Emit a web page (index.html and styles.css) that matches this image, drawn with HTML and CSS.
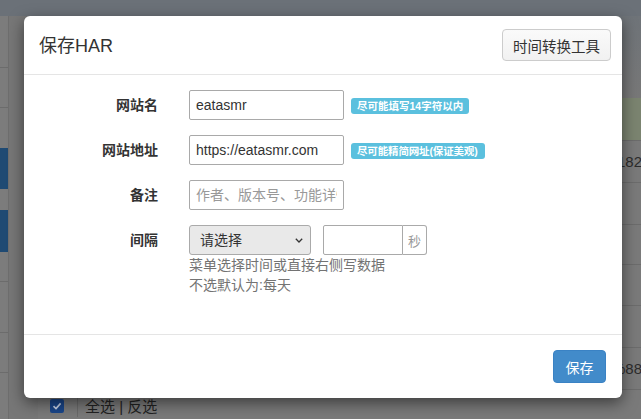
FILE: index.html
```html
<!DOCTYPE html>
<html lang="zh-CN">
<head>
<meta charset="utf-8">
<title>保存HAR</title>
<link rel="stylesheet" href="styles.css">
</head>
<body>
<div class="page">
  <div class="page-top"></div>
  <div class="page-main">
    <aside class="side">
      <div class="side-cell h52"></div>
      <div class="side-cell h40"></div>
      <div class="side-gap h40"></div>
      <div class="side-blue h41"></div>
      <div class="side-gap h21"></div>
      <div class="side-blue h42"></div>
      <div class="side-cell h30"></div>
      <div class="side-cell h51"></div>
      <div class="side-cell h40"></div>
    </aside>
    <div class="gutter"></div>
    <div class="content">
      <div class="c-head"></div>
      <div class="c-green"></div>
      <div class="c-row"><span class="num">182</span></div>
      <div class="c-row"></div>
      <div class="c-row h40"></div>
      <div class="c-row h41"></div>
      <div class="c-row"></div>
      <div class="c-row"><span class="num">%88</span></div>
      <div class="c-foot">
        <span class="check"><svg width="10" height="10" viewBox="0 0 10 10"><path d="M1.5 5.2 L4 7.6 L8.6 2.4" fill="none" stroke="#c9d3e6" stroke-width="1.6"/></svg></span>
        <span class="sep"></span>
        <span class="foot-text">全选 | 反选</span>
      </div>
    </div>
  </div>
</div>

<div class="modal">
  <div class="modal-header">
    <h4 class="modal-title">保存HAR</h4>
    <button class="btn btn-default" type="button">时间转换工具</button>
  </div>
  <div class="modal-body">
    <div class="form-row">
      <label class="form-label">网站名</label>
      <div class="field">
        <input class="form-control" type="text" value="eatasmr">
        <span class="badge">尽可能填写14字符以内</span>
      </div>
    </div>
    <div class="form-row">
      <label class="form-label">网站地址</label>
      <div class="field">
        <input class="form-control" type="text" value="https://eatasmr.com">
        <span class="badge badge-tight">尽可能精简网址(保证美观)</span>
      </div>
    </div>
    <div class="form-row">
      <label class="form-label">备注</label>
      <div class="field">
        <input class="form-control" type="text" placeholder="作者、版本号、功能详情">
      </div>
    </div>
    <div class="form-row last">
      <label class="form-label">间隔</label>
      <div class="field-col">
        <div class="field interval">
          <div class="select-wrap">
            <select class="select"><option>请选择</option></select>
            <svg class="chev" width="8" height="5" viewBox="0 0 8 5"><path d="M0.8 0.8 L4 4 L7.2 0.8" fill="none" stroke="#333" stroke-width="1.3"/></svg>
          </div>
          <div class="input-group">
            <input class="form-control sec" type="text">
            <span class="addon">秒</span>
          </div>
        </div>
        <p class="help">菜单选择时间或直接右侧写数据<br>不选默认为:每天</p>
      </div>
    </div>
  </div>
  <div class="modal-footer">
    <button class="btn btn-primary" type="button">保存</button>
  </div>
</div>
</body>
</html>
```

FILE: styles.css
```css
* { box-sizing: border-box; }

html, body {
  margin: 0;
  padding: 0;
}

body {
  width: 641px;
  height: 419px;
  overflow: hidden;
  position: relative;
  background: #7a7a7a;
  font-family: "Liberation Sans", "Noto Sans CJK SC", sans-serif;
  font-size: 14px;
  color: #333;
}

/* ---------- dimmed page behind the modal ---------- */
.page-top {
  height: 16px;
  background: #6b7178;
}

.page-main {
  display: flex;
  height: 403px;
}

.side {
  width: 9px;
  background: #7c7c7c;
  border-right: 1px solid #6e6e6e;
  display: flex;
  flex-direction: column;
}
.side-cell { border-bottom: 1px solid #6c6c6c; }
.side-blue { background: #1f4a73; }
.h52 { height: 52px; }
.h40 { height: 40px; }
.h41 { height: 41px; }
.h42 { height: 42px; }
.h30 { height: 30px; }
.h51 { height: 51px; }
.h21 { height: 21px; }

.gutter {
  width: 29px;
  background: #777;
}

.content {
  flex: 1;
  display: flex;
  flex-direction: column;
  background: #7a7a7a;
}
.c-head {
  height: 82px;
  background: linear-gradient(#6f7479, #787878);
}
.c-green {
  height: 42px;
  background: #7b8470;
}
.c-row {
  height: 42px;
  border-top: 1px solid #6c6c6c;
  display: flex;
  align-items: center;
  justify-content: flex-end;
}
.c-row.h40 { height: 40px; }
.c-row.h41 { height: 41px; }
.num {
  color: #2c2c2c;
  font-size: 15px;
  margin-right: -1px;
}
.c-foot {
  flex: 1;
  border-top: 1px solid #6c6c6c;
  display: flex;
  align-items: center;
  padding-left: 12px;
  padding-top: 2px;
}
.check {
  width: 14px;
  height: 14px;
  background: #1a468a;
  border-radius: 2px;
  display: flex;
  align-items: center;
  justify-content: center;
}
.sep {
  width: 1px;
  height: 22px;
  background: #6a6a6a;
  margin-left: 13px;
  margin-right: 7px;
}
.foot-text {
  color: #222;
  font-size: 15px;
}

/* ---------- modal ---------- */
.modal {
  position: absolute;
  left: 24px;
  top: 16px;
  width: 598px;
  background: #fff;
  border-radius: 6px;
  box-shadow: 0 5px 15px rgba(0, 0, 0, 0.5);
}

.modal-header {
  display: flex;
  justify-content: space-between;
  align-items: center;
  padding: 12px 11px 12px 15px;
  border-bottom: 1px solid #e5e5e5;
}
.modal-title {
  margin: 0;
  font-size: 18px;
  font-weight: normal;
  color: #333;
  line-height: 32px;
  padding-top: 2px;
}

.btn {
  font-family: "Liberation Sans", "Noto Sans CJK SC", sans-serif;
  font-size: 14px;
  border-radius: 4px;
  cursor: pointer;
}
.btn-default {
  width: 109px;
  height: 32px;
  border: 1px solid #ccc;
  background: linear-gradient(#fafafa, #f1f1f1);
  color: #333;
  padding: 0;
  font-size: 14.5px;
}
.btn-primary {
  width: 53px;
  height: 33px;
  border: 1px solid #3a82c4;
  background: #428bca;
  color: #fff;
  padding: 0;
}

.modal-body {
  padding: 15px 15px 39px 15px;
}

.form-row {
  display: grid;
  grid-template-columns: 119px auto;
  column-gap: 31px;
  align-items: start;
  margin-bottom: 15px;
}
.form-row.last { margin-bottom: 0; }

.form-label {
  text-align: right;
  font-weight: bold;
  line-height: 30px;
  color: #333;
}

.field {
  display: flex;
  align-items: center;
  gap: 7px;
}

.form-control {
  width: 155px;
  height: 30px;
  border: 1px solid #a9a9a9;
  border-radius: 2px;
  padding: 0 6px;
  font-family: "Liberation Sans", "Noto Sans CJK SC", sans-serif;
  font-size: 14px;
  color: #333;
  background: #fff;
  outline: none;
}
.form-control::placeholder {
  color: #999;
}

.badge {
  display: inline-block;
  background: #5bc0de;
  color: #fff;
  font-size: 10.5px;
  font-weight: bold;
  line-height: 16px;
  height: 16px;
  padding: 0 6px;
  border-radius: 3px;
  white-space: nowrap;
  margin-top: 2px;
}
.badge-tight {
  letter-spacing: -0.15px;
  padding: 0 7px 0 6px;
}

.interval { gap: 12px; }

.select-wrap {
  position: relative;
  width: 122px;
  height: 30px;
}
.select {
  appearance: none;
  -webkit-appearance: none;
  width: 122px;
  height: 30px;
  border: 1px solid #aaa;
  border-radius: 3px;
  background: #e9e9e9;
  padding: 0 10px;
  font-family: "Liberation Sans", "Noto Sans CJK SC", sans-serif;
  font-size: 14px;
  color: #333;
}
.chev {
  position: absolute;
  right: 8px;
  top: 13px;
  pointer-events: none;
}

.input-group {
  display: flex;
}
.form-control.sec {
  width: 80px;
  border-radius: 2px 0 0 2px;
}
.addon {
  width: 24px;
  height: 30px;
  border: 1px solid #aaa;
  border-left: none;
  border-radius: 0 3px 3px 0;
  display: flex;
  align-items: center;
  justify-content: center;
  color: #999;
  font-size: 13px;
}

.help {
  margin: 0;
  color: #737373;
  line-height: 20px;
}

.modal-footer {
  border-top: 1px solid #e5e5e5;
  padding: 15px 16px 15px;
  display: flex;
  justify-content: flex-end;
}
```
